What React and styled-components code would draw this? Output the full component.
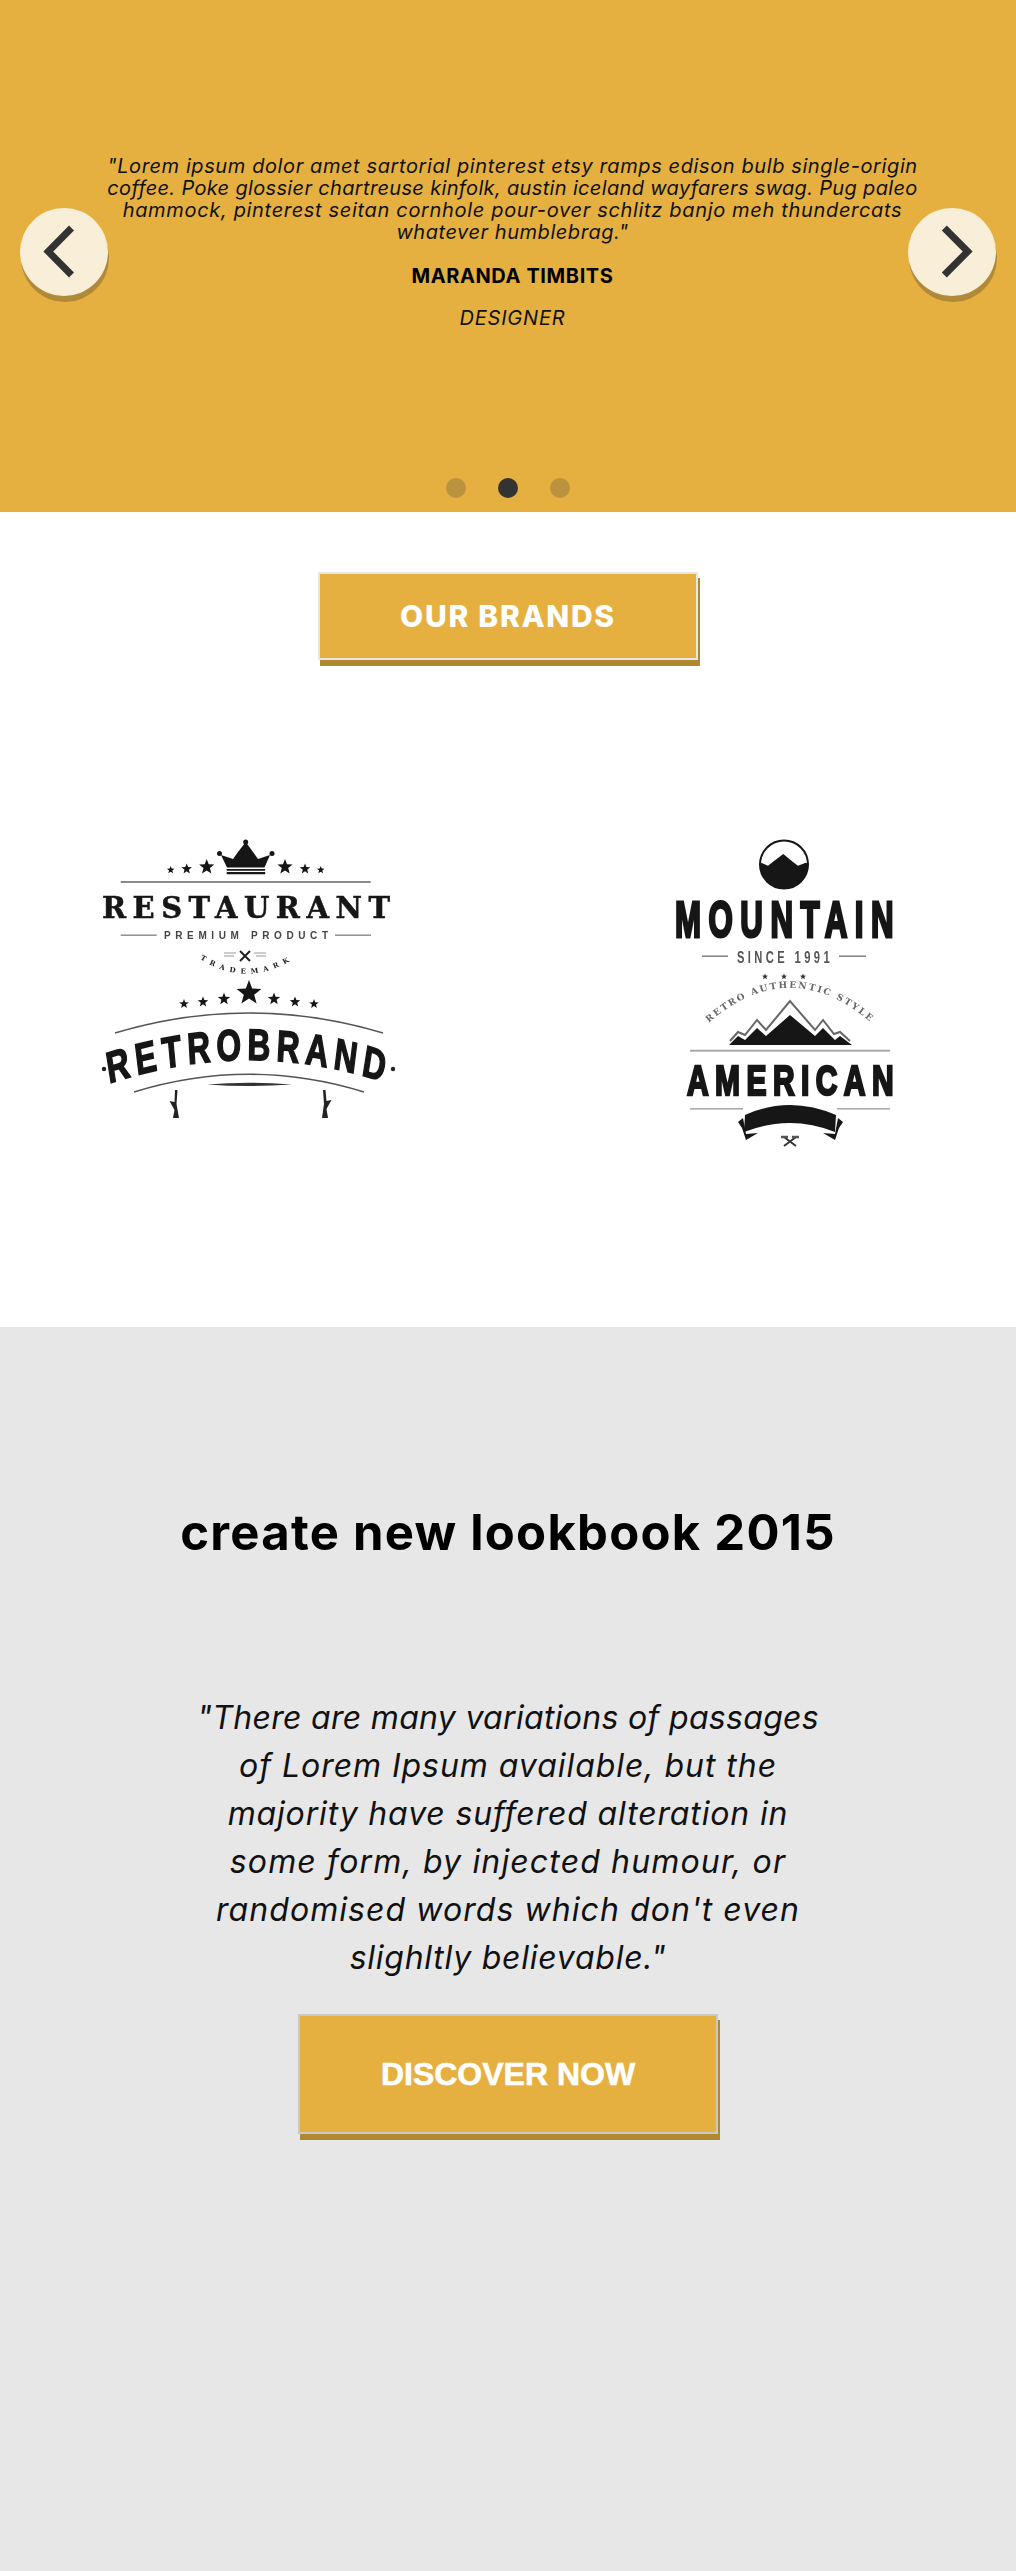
import React from "react";
import styled, { createGlobalStyle } from "styled-components";

const GOLD = "#e5b040";
const SANS = '"Inter", "Liberation Sans", sans-serif';
const HEAVY = '"Liberation Sans", Arial, sans-serif';

const Global = createGlobalStyle`
  html, body { margin: 0; padding: 0; background: #fff; }
  body { font-family: ${SANS}; color: #000; }
`;

const Page = styled.div`
  width: 1016px;
  height: 2571px;
  overflow: hidden;
`;

const Hero = styled.section`
  position: relative;
  height: 512px;
  background: ${GOLD};
  display: flex;
  flex-direction: column;
  align-items: center;
  padding: 155px 0 0 9px;
  box-sizing: border-box;
`;

const Quote = styled.p`
  margin: 0;
  font-size: 20px;
  line-height: 22px;
  font-style: italic;
  text-align: center;
  color: #111;
  white-space: nowrap;
`;

const Line = styled.span`
  display: block;
  letter-spacing: ${(p) => p.$spacing}px;
`;

const Name = styled.h4`
  margin: 21px 0 0;
  font-size: 20px;
  line-height: 24px;
  letter-spacing: 0.6px;
  font-weight: 700;
`;

const Role = styled.p`
  margin: 18px 0 0;
  font-size: 20px;
  line-height: 24px;
  letter-spacing: 0.8px;
  font-style: italic;
  color: #111;
`;

const Arrow = styled.button`
  position: absolute;
  top: 208px;
  ${(p) => (p.$side === "left" ? "left: 20px;" : "right: 20px;")}
  width: 88px;
  height: 88px;
  padding: 0;
  border: 0;
  border-radius: 50%;
  background: #f9eed8;
  box-shadow: 1px 6px 0 #b08a38;
  display: flex;
  align-items: center;
  justify-content: center;
`;

const Dots = styled.div`
  position: absolute;
  bottom: 14px;
  left: 446px;
  display: flex;
  gap: 32px;
`;

const Dot = styled.span`
  width: 20px;
  height: 20px;
  border-radius: 50%;
  background: ${(p) => (p.$active ? "#333" : "#bb933e")};
`;

const Brands = styled.section`
  height: 815px;
  background: #fff;
  padding-top: 60px;
  box-sizing: border-box;
  display: flex;
  flex-direction: column;
  align-items: center;
`;

const CTA = styled.button`
  box-sizing: border-box;
  width: ${(p) => p.$w}px;
  height: ${(p) => p.$h}px;
  margin: 0;
  padding: 0;
  background: ${GOLD};
  border: 2px solid ${(p) => p.$border};
  box-shadow: 2px 6px 0 #b08830;
  color: #fff;
  font-family: ${(p) => p.$font};
  font-size: ${(p) => p.$size}px;
  font-weight: ${(p) => p.$weight};
  letter-spacing: ${(p) => p.$spacing || 0}px;
  -webkit-text-stroke: ${(p) => p.$stroke || 0}px #fff;
`;

const LogoRow = styled.div`
  width: 100%;
  box-sizing: border-box;
  margin-top: 160px;
  padding-left: 80px;
  display: flex;
  gap: 230px;
  align-items: flex-start;
`;

const Logo = styled.svg`
  display: block;
  filter: blur(0.55px);
  flex: none;
`;

const Look = styled.section`
  height: 1244px;
  background: #e7e7e7;
  display: flex;
  flex-direction: column;
  align-items: center;
  padding-top: 173px;
  box-sizing: border-box;
`;

const Title = styled.h2`
  margin: 0;
  font-size: 49px;
  line-height: 66px;
  letter-spacing: 1.25px;
  font-weight: 700;
  color: #000;
  white-space: nowrap;
`;

const Body = styled.p`
  margin: 128px 0 32px;
  font-size: 32px;
  line-height: 48px;
  font-style: italic;
  text-align: center;
  color: #111;
  white-space: nowrap;
`;

const Chevron = ({ dir }) => (
  <svg width="88" height="88" viewBox="0 0 88 88" fill="none" aria-hidden="true">
    <path
      d={dir === "left" ? "M51.5 20 L28.3 43.5 L51.5 67" : "M36.3 20 L59.7 43.5 L36.3 67"}
      stroke="#333"
      strokeWidth="7"
    />
  </svg>
);

const star = (cx, cy, r) => {
  const pts = [];
  for (let i = 0; i < 10; i++) {
    const a = -Math.PI / 2 + (i * Math.PI) / 5;
    const rr = i % 2 ? r * 0.42 : r;
    pts.push(`${(cx + rr * Math.cos(a)).toFixed(1)},${(cy + rr * Math.sin(a)).toFixed(1)}`);
  }
  return pts.join(" ");
};

const Stars = ({ items, fill = "#161616" }) =>
  items.map(([x, y, r]) => <polygon key={`${x}-${y}`} points={star(x, y, r)} fill={fill} />);

const RestaurantLogo = () => (
  <Logo width="340" height="320" viewBox="80 820 340 320" role="img" aria-label="Restaurant Retrobrand">
    <path
      fill="#161616"
      d="M227 867.5 L221 855 L233 859 L238 852 L245.7 842 L253 852 L258 859 L270 855 L264.5 867.5 z M226.7 869 h38.5 v1.8 h-38.5 z M226.7 872 h38.5 v2.2 h-38.5 z"
    />
    <circle cx="219.5" cy="853.5" r="2.5" fill="#161616" />
    <circle cx="245.7" cy="842" r="2.5" fill="#161616" />
    <circle cx="272" cy="853.5" r="2.5" fill="#161616" />
    <Stars items={[[170.7,870,4],[186.7,869,5.5],[206.7,867,8],[285,867,8],[305,869,5.5],[320.7,870,4]]} />
    <rect x="120.7" y="881" width="250" height="2" fill="#8a8a8a" />
    <text x="102" y="918" fontFamily='"DejaVu Serif", serif' fontWeight="700" fontSize="29" fill="#161616" stroke="#161616" strokeWidth="0.5" textLength="288">RESTAURANT</text>
    <rect x="120.7" y="934.5" width="36" height="1.4" fill="#888" />
    <rect x="335" y="934.5" width="36" height="1.4" fill="#888" />
    <text x="164" y="939" fontFamily={HEAVY} fontWeight="700" fontSize="10" fill="#444" textLength="164">PREMIUM PRODUCT</text>
    <path d="M240 951 L250 961 M250 951 L240 961" stroke="#222" strokeWidth="2" />
    <path d="M224 953 h12 M224 956 h10 M254 953 h12 M256 956 h10" stroke="#999" strokeWidth="1" />
    <path id="trade" d="M194 955 Q246 992 300 955" fill="none" />
    <text fontFamily='"DejaVu Serif", serif' fontWeight="700" fontSize="7" fill="#222" letterSpacing="5.2">
      <textPath href="#trade" startOffset="50%" textAnchor="middle">TRADEMARK</textPath>
    </text>
    <Stars items={[[249,993,13],[224,999,6.5],[203,1002,5.5],[184,1004,5],[274,999,6.5],[295,1002,5.5],[314,1004,5]]} />
    <path d="M115 1033 Q249 993 383 1033" fill="none" stroke="#555" strokeWidth="1.6" />
    <g transform="translate(249 0) scale(0.72 1)">
      <path id="retro" d="M-222 1091 Q0 1029 222 1091" fill="none" />
      <text fontFamily={HEAVY} fontWeight="700" fontSize="44" fill="#161616" stroke="#161616" strokeWidth="1.6" letterSpacing="8">
        <textPath href="#retro" startOffset="50%" textAnchor="middle">RETROBRAND</textPath>
      </text>
    </g>
    <circle cx="104" cy="1069" r="2.2" fill="#222" />
    <circle cx="393" cy="1069" r="2.2" fill="#222" />
    <path d="M134 1092 Q249 1056.5 364 1092" fill="none" stroke="#555" strokeWidth="1.6" />
    <path d="M207 1084.5 Q249 1081 292 1084.5 Q249 1087.5 207 1084.5 z" fill="#333" />
    <path d="M175 1090 h2.5 l-1 14 l2.5 14 h-6 l1.5 -8 l-5 -9 l5 1 z" fill="#222" />
    <path d="M323 1090 h2.5 l1 11 l5 -1 l-5 9 l1.5 9 h-6 l2 -14 z" fill="#222" />
  </Logo>
);

const MountainLogo = () => (
  <Logo width="260" height="340" viewBox="650 820 260 340" role="img" aria-label="Mountain American">
    <clipPath id="disc"><circle cx="784" cy="864.5" r="24" /></clipPath>
    <circle cx="784" cy="864.5" r="24" fill="#fff" stroke="#161616" strokeWidth="2" />
    <path clipPath="url(#disc)" fill="#161616" d="M755 866 L761.7 863 L768 865.7 L774 861 L783.3 854 L793 862 L798 865.7 L805.7 862.7 L815 866 V892 H755 z" />
    <text x="675" y="937" fontFamily={HEAVY} fontWeight="700" fontSize="50" letterSpacing="12" fill="#161616" stroke="#161616" strokeWidth="3" textLength="226" lengthAdjust="spacingAndGlyphs">MOUNTAIN</text>
    <rect x="702" y="955.5" width="26" height="1.4" fill="#777" />
    <rect x="839" y="955.5" width="27" height="1.4" fill="#777" />
    <text x="737" y="962.5" fontFamily={HEAVY} fontWeight="700" fontSize="16.5" letterSpacing="5" fill="#555" textLength="96" lengthAdjust="spacingAndGlyphs">SINCE 1991</text>
    <Stars items={[[765,976.7,3.2],[784,976.7,3.2],[803,976.7,3.2]]} fill="#333" />
    <path id="style" d="M700 1030.6 Q790 945 880 1030.6" fill="none" />
    <text fontFamily='"DejaVu Serif", serif' fontWeight="700" fontSize="9" fill="#666" letterSpacing="2">
      <textPath href="#style" startOffset="50%" textAnchor="middle">RETRO AUTHENTIC STYLE</textPath>
    </text>
    <path fill="none" stroke="#666" strokeWidth="2" d="M730 1041 L738 1032 L745 1035 L757 1020 L766 1030 L790 1001 L815 1030 L823 1020 L834 1034 L840 1032 L850 1041" />
    <path fill="#161616" d="M729 1045 L738 1036 L745 1040 L757 1028 L766 1036 L790 1015 L815 1036 L823 1028 L835 1040 L840 1036 L852 1045 z" />
    <rect x="690" y="1049.7" width="200" height="2" fill="#aaa" />
    <text x="687" y="1095" fontFamily={HEAVY} fontWeight="700" fontSize="42" letterSpacing="9" fill="#161616" stroke="#161616" strokeWidth="2.6" textLength="213" lengthAdjust="spacingAndGlyphs">AMERICAN</text>
    <rect x="690" y="1108" width="53" height="1.6" fill="#aaa" />
    <rect x="837" y="1108" width="53" height="1.6" fill="#aaa" />
    <path fill="#161616" d="M745 1115 Q790 1095 836 1115 L835 1132 Q790 1114 744 1132 z" />
    <path fill="#161616" d="M743 1118 L738 1122 L742 1128 L746 1140 L758 1133 L746 1134 z M838 1118 L843 1122 L839 1128 L835 1140 L823 1133 L835 1134 z" />
    <path d="M784 1137 L796 1146 M796 1137 L784 1146" stroke="#333" strokeWidth="2" />
    <path d="M781 1137 h7 M792 1137 h7" stroke="#555" strokeWidth="2.4" />
  </Logo>
);

export default function App() {
  return (
    <Page>
      <Global />
      <Hero>
        <Arrow $side="left" aria-label="Previous"><Chevron dir="left" /></Arrow>
        <Quote>
          <Line $spacing={0.6}>"Lorem ipsum dolor amet sartorial pinterest etsy ramps edison bulb single-origin</Line>
          <Line $spacing={0.34}>coffee. Poke glossier chartreuse kinfolk, austin iceland wayfarers swag. Pug paleo</Line>
          <Line $spacing={0.67}>hammock, pinterest seitan cornhole pour-over schlitz banjo meh thundercats</Line>
          <Line $spacing={0.54}>whatever humblebrag."</Line>
        </Quote>
        <Name>MARANDA TIMBITS</Name>
        <Role>DESIGNER</Role>
        <Arrow $side="right" aria-label="Next"><Chevron dir="right" /></Arrow>
        <Dots>
          <Dot />
          <Dot $active />
          <Dot />
        </Dots>
      </Hero>
      <Brands>
        <CTA $w={380} $h={88} $border="#e6e6e6" $font={SANS} $size={30} $weight={800} $spacing={1.7}>OUR BRANDS</CTA>
        <LogoRow>
          <RestaurantLogo />
          <MountainLogo />
        </LogoRow>
      </Brands>
      <Look>
        <Title>create new lookbook 2015</Title>
        <Body>
          <Line $spacing={0.3}>"There are many variations of passages</Line>
          <Line $spacing={0.95}>of Lorem Ipsum available, but the</Line>
          <Line $spacing={0.85}>majority have suffered alteration in</Line>
          <Line $spacing={1.15}>some form, by injected humour, or</Line>
          <Line $spacing={1.07}>randomised words which don't even</Line>
          <Line $spacing={0.75}>slighltly believable."</Line>
        </Body>
        <CTA $w={420} $h={120} $border="#c9c9c9" $font={HEAVY} $size={32} $weight={700} $stroke={0.6}>DISCOVER NOW</CTA>
      </Look>
    </Page>
  );
}
